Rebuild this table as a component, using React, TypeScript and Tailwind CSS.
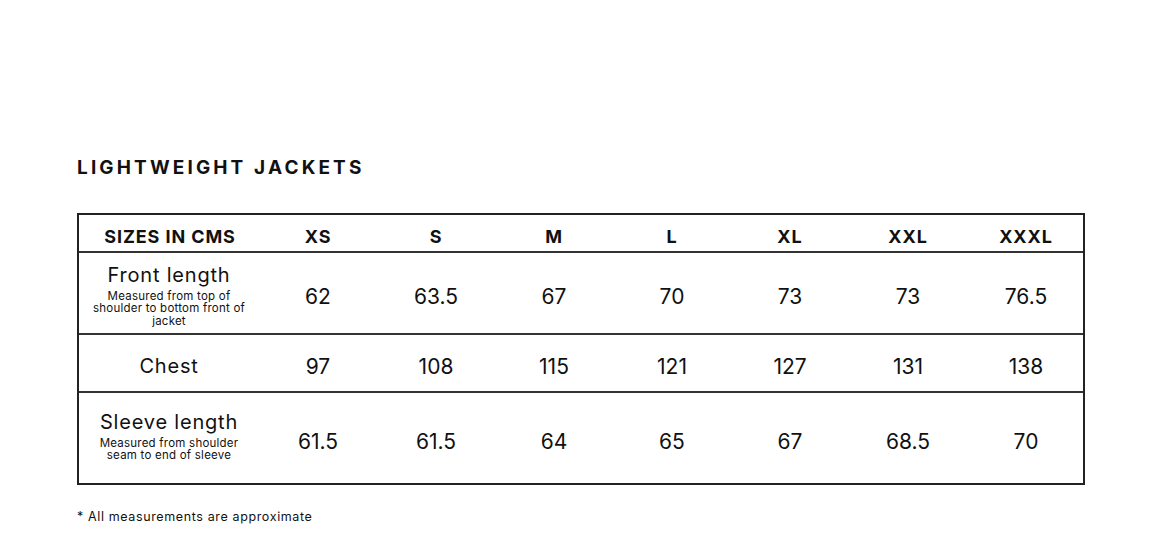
import React from 'react';

const sizes = ['XS', 'S', 'M', 'L', 'XL', 'XXL', 'XXXL'];

const rows = [
  {
    label: 'Front length',
    note: ['Measured from top of', 'shoulder to bottom front of', 'jacket'],
    values: ['62', '63.5', '67', '70', '73', '73', '76.5'],
    height: 'h-[82px]',
    shift: 'pt-[5px]',
  },
  {
    label: 'Chest',
    note: [],
    values: ['97', '108', '115', '121', '127', '131', '138'],
    height: 'h-[58px]',
    shift: 'pt-[7px]',
  },
  {
    label: 'Sleeve length',
    note: ['Measured from shoulder', 'seam to end of sleeve'],
    values: ['61.5', '61.5', '64', '65', '67', '68.5', '70'],
    height: 'h-[90px]',
    shift: 'pb-[4px]',
  },
];

export default function App() {
  return (
    <div className="w-[1170px] h-[553px] bg-white text-[#111] font-['Inter',sans-serif] pl-[77px] pt-[156px]">
      {/* Title */}
      <h1 className="text-[19px] font-bold tracking-[0.165em] leading-[24px]">LIGHTWEIGHT JACKETS</h1>

      {/* Size table */}
      <div className="mt-[33px] w-[1008px] border-2 border-[#222]">
        <div className="grid grid-cols-[180px_repeat(7,118px)] h-[38px] items-center border-b-2 border-[#333] text-[18px] font-bold tracking-[0.05em] pt-[6px]">
          <div className="text-center pl-[2px]">SIZES IN CMS</div>
          {sizes.map((s) => (
            <div key={s} className="text-center">{s}</div>
          ))}
        </div>

        {rows.map((r, i) => (
          <div
            key={r.label}
            className={`grid grid-cols-[180px_repeat(7,118px)] items-center ${r.height} ${i < rows.length - 1 ? 'border-b-2 border-[#333]' : ''}`}
          >
            <div className={`text-center ${r.shift}`}>
              <div className="text-[20px] leading-[23px] tracking-[0.04em]">{r.label}</div>
              {r.note.length > 0 && (
                <div className="text-[11.5px] leading-[12.5px] mt-[3px] tracking-[0.02em]">
                  {r.note.map((n) => (
                    <div key={n}>{n}</div>
                  ))}
                </div>
              )}
            </div>
            {r.values.map((v, j) => (
              <div key={j} className="text-center text-[21px] pt-[8px]">{v}</div>
            ))}
          </div>
        ))}
      </div>

      <p className="mt-[23px] text-[12.5px] tracking-[0.05em]">* All measurements are approximate</p>
    </div>
  );
}
